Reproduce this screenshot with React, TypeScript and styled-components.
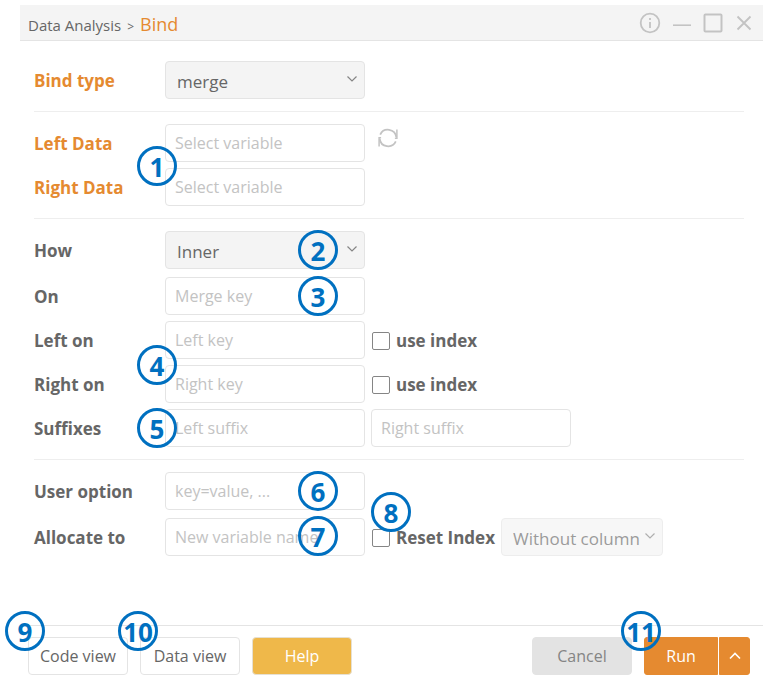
import React, { useState } from "react";
import styled, { createGlobalStyle } from "styled-components";

const colors = {
  accent: "#e58a30",
  amber: "#efb84a",
  text: "#666666",
  muted: "#c3c3c3",
  line: "#e4e4e4",
  faint: "#eeeeee",
  panel: "#f4f4f4",
  badge: "#0070c0",
};

const GlobalStyle = createGlobalStyle`
  * { box-sizing: border-box; }
  body {
    margin: 0;
    background: #fff;
    color: ${colors.text};
    font-family: "Open Sans", "Noto Sans", sans-serif;
    font-size: 16px;
  }
  button, input, select { font: inherit; color: inherit; }
`;

const Dialog = styled.main`
  margin: 5px 7px 0 20px;
`;

const TitleBar = styled.header`
  display: flex;
  align-items: center;
  justify-content: space-between;
  height: 36px;
  padding: 0 10px 0 8px;
  background: ${colors.panel};
  border-bottom: 1px solid ${colors.line};
`;

const Breadcrumb = styled.h1`
  display: flex;
  align-items: baseline;
  gap: 6px;
  margin: 0;
  padding-top: 6px;
  font-size: 15px;
  font-weight: 400;
  line-height: 24px;
`;

const Chevron = styled.span`
  font-size: 12px;
`;

const Current = styled.span`
  color: ${colors.accent};
  font-size: 18px;
`;

const WindowControls = styled.div`
  display: flex;
  align-items: center;
  gap: 12px;
`;

const IconButton = styled.button`
  display: flex;
  padding: 0;
  border: 0;
  background: none;
  color: ${colors.muted};
  cursor: pointer;
`;

const RefreshButton = styled(IconButton)`
  align-self: flex-start;
  margin: 4px 0 0 7px;
`;

const Form = styled.form`
  padding: 8px 19px 57px 14px;
`;

const Section = styled.section`
  padding: 12px 0;
  & + & {
    border-top: 1px solid ${colors.faint};
  }
`;

const Row = styled.div<{ $roomy?: boolean }>`
  display: flex;
  align-items: center;
  margin-bottom: ${(p) => (p.$roomy ? "8px" : "6px")};
  &:last-child {
    margin-bottom: 0;
  }
`;

const FieldLabel = styled.label<{ $required?: boolean }>`
  flex: 0 0 131px;
  padding-top: 2px;
  font-size: 17px;
  font-weight: 700;
  line-height: 24px;
  color: ${(p) => (p.$required ? colors.accent : colors.text)};
`;

const Fields = styled.div`
  position: relative;
  display: flex;
  align-items: center;
  gap: 6px;
`;

const TextInput = styled.input`
  width: 200px;
  height: 38px;
  padding: 0 9px;
  border: 1px solid ${colors.line};
  border-radius: 4px;
  background: #fff;
  &::placeholder {
    color: ${colors.muted};
    opacity: 1;
  }
`;

const SelectFrame = styled.div<{ $narrow?: boolean; $off?: boolean }>`
  display: grid;
  align-items: center;
  width: ${(p) => (p.$narrow ? "162px" : "200px")};
  opacity: ${(p) => (p.$off ? 0.65 : 1)};
  & > * {
    grid-area: 1 / 1;
  }
  & > svg {
    justify-self: end;
    margin: 0 7px 2px 0;
    pointer-events: none;
  }
`;

const SelectBox = styled.select`
  width: 100%;
  height: 38px;
  padding: 3px 11px 0;
  border: 1px solid ${colors.line};
  border-radius: 4px;
  background: ${colors.panel};
  font-size: 17px;
  appearance: none;
  opacity: 1;
`;

const CheckLabel = styled.label`
  display: flex;
  align-items: center;
  gap: 6px;
  padding: 2px 0 0 1px;
  font-size: 17px;
  font-weight: 700;
  line-height: 24px;
  white-space: nowrap;
`;

const CheckBox = styled.input`
  width: 18px;
  height: 18px;
  margin: 0;
  border: 1px solid #858585;
  border-radius: 2px;
  background: #fff;
  appearance: none;
  &:checked {
    background: ${colors.accent};
  }
`;

const Footer = styled.footer`
  display: flex;
  align-items: center;
  justify-content: space-between;
  gap: 12px;
  padding: 11px 13px 8px 8px;
  border-top: 1px solid ${colors.line};
`;

const Actions = styled.div`
  position: relative;
  display: flex;
  gap: 12px;
`;

const Split = styled.div`
  position: relative;
  display: flex;
  gap: 1px;
`;

type Tone = "plain" | "help" | "cancel" | "run";
const tones: Record<Tone, string> = {
  plain: `background: #fff; color: ${colors.text}; border-color: ${colors.line};`,
  help: `background: ${colors.amber}; color: #fff; border-color: #e6e0d2;`,
  cancel: `background: #e3e3e3; color: #858585; border-color: #e3e3e3;`,
  run: `background: ${colors.accent}; color: #fff; border-color: ${colors.accent};`,
};

const ActionButton = styled.button<{ $tone: Tone; $part?: "main" | "menu" }>`
  display: flex;
  align-items: center;
  justify-content: center;
  width: ${(p) => (p.$part === "main" ? 74 : p.$part === "menu" ? 31 : 100)}px;
  height: 38px;
  padding: 0;
  border: 1px solid;
  border-radius: ${(p) =>
    p.$part === "main" ? "3px 0 0 3px" : p.$part === "menu" ? "0 3px 3px 0" : "4px"};
  cursor: pointer;
  ${(p) => tones[p.$tone]}
`;

/* Numbered callout laid over the control that it explains. */
const Callout = styled.span<{ $x: number; $y: number }>`
  position: absolute;
  left: ${(p) => p.$x}px;
  top: ${(p) => p.$y}px;
  z-index: 1;
  display: flex;
  align-items: center;
  justify-content: center;
  width: 40px;
  height: 40px;
  padding-top: 2px;
  border: 3px solid ${colors.badge};
  border-radius: 50%;
  color: ${colors.badge};
  font-size: 26px;
  font-weight: 700;
  line-height: 30px;
  pointer-events: none;
`;

const InfoIcon = () => (
  <svg width="22" height="22" viewBox="0 0 22 22" fill="none" stroke="currentColor" strokeWidth="1.8">
    <circle cx="11" cy="11" r="9.3" />
    <path d="M11 10v6M11 6v2" />
  </svg>
);

const MinimizeIcon = () => (
  <svg width="18" height="22" viewBox="0 0 18 22" fill="none" stroke="currentColor" strokeWidth="1.6">
    <path d="M0 13.2h18" />
  </svg>
);

const MaximizeIcon = () => (
  <svg width="20" height="22" viewBox="0 0 20 22" fill="none" stroke="currentColor" strokeWidth="2">
    <rect x="1.5" y="2.5" width="17" height="17" rx="1" />
  </svg>
);

const CloseIcon = () => (
  <svg width="18" height="22" viewBox="0 0 18 22" fill="none" stroke="currentColor" strokeWidth="1.8">
    <path d="M2.5 4.5l13 13M15.5 4.5l-13 13" />
  </svg>
);

const RefreshIcon = () => (
  <svg width="20" height="20" viewBox="0 0 20 20" fill="none" stroke="currentColor" strokeWidth="1.8">
    <path d="M2.200 6.600A8.500 8.500 0 0 1 18.300 9M17.800 13.400A8.500 8.500 0 0 1 1.700 11" />
    <path d="M18.900 1.500v8.700h-2M1.100 18.500v-8.700h2" strokeWidth="1.5" />
  </svg>
);

const DownIcon = () => (
  <svg width="12" height="8" viewBox="0 0 12 8" fill="none" stroke="#858585" strokeWidth="1.2">
    <path d="M1.5 1.5L6 6l4.500-4.500" />
  </svg>
);

const UpIcon = () => (
  <svg width="12" height="8" viewBox="0 0 12 8" fill="none" stroke="currentColor" strokeWidth="1.6">
    <path d="M1 6.500L6 1.500l5 5" />
  </svg>
);

interface SelectProps {
  id?: string;
  label?: string;
  options: string[];
  narrow?: boolean;
  disabled?: boolean;
}

const Select = ({ id, label, options, narrow, disabled }: SelectProps) => (
  <SelectFrame $narrow={narrow} $off={disabled}>
    <SelectBox id={id} aria-label={label} disabled={disabled}>
      {options.map((o) => (
        <option key={o}>{o}</option>
      ))}
    </SelectBox>
    <DownIcon />
  </SelectFrame>
);

const Check = ({ children }: { children: React.ReactNode }) => (
  <CheckLabel>
    <CheckBox type="checkbox" />
    {children}
  </CheckLabel>
);

interface FieldProps {
  id: string;
  label: string;
  required?: boolean;
  roomy?: boolean;
  children: React.ReactNode;
}

const Field = ({ id, label, required, roomy, children }: FieldProps) => (
  <Row $roomy={roomy}>
    <FieldLabel htmlFor={id} $required={required}>
      {label}
    </FieldLabel>
    <Fields>{children}</Fields>
  </Row>
);

export default function App() {
  const [resetIndex, setResetIndex] = useState(false);
  return (
    <>
      <GlobalStyle />
      <Dialog>
        <TitleBar>
          <Breadcrumb>
            Data Analysis <Chevron>&gt;</Chevron> <Current>Bind</Current>
          </Breadcrumb>
          <WindowControls>
            <IconButton aria-label="Information"><InfoIcon /></IconButton>
            <IconButton aria-label="Minimize"><MinimizeIcon /></IconButton>
            <IconButton aria-label="Maximize"><MaximizeIcon /></IconButton>
            <IconButton aria-label="Close"><CloseIcon /></IconButton>
          </WindowControls>
        </TitleBar>

        <Form onSubmit={(e) => e.preventDefault()}>
          <Section>
            <Field id="bindType" label="Bind type" required>
              <Select id="bindType" options={["merge", "concat"]} />
            </Field>
          </Section>

          <Section>
            <Field id="leftData" label="Left Data" required>
              <TextInput id="leftData" placeholder="Select variable" />
              <RefreshButton type="button" aria-label="Refresh"><RefreshIcon /></RefreshButton>
              <Callout $x={-28} $y={22}>1</Callout>
            </Field>
            <Field id="rightData" label="Right Data" required>
              <TextInput id="rightData" placeholder="Select variable" />
            </Field>
          </Section>

          <Section>
            <Field id="how" label="How" roomy>
              <Select id="how" options={["Inner", "Outer", "Left", "Right"]} />
              <Callout $x={133} $y={-1}>2</Callout>
            </Field>
            <Field id="on" label="On">
              <TextInput id="on" placeholder="Merge key" />
              <Callout $x={133} $y={-1}>3</Callout>
            </Field>
            <Field id="leftOn" label="Left on">
              <TextInput id="leftOn" placeholder="Left key" />
              <Check>use index</Check>
              <Callout $x={-28} $y={24}>4</Callout>
            </Field>
            <Field id="rightOn" label="Right on">
              <TextInput id="rightOn" placeholder="Right key" />
              <Check>use index</Check>
            </Field>
            <Field id="leftSuffix" label="Suffixes">
              <TextInput id="leftSuffix" placeholder="Left suffix" />
              <TextInput aria-label="Right suffix" placeholder="Right suffix" />
              <Callout $x={-28} $y={-1}>5</Callout>
            </Field>
          </Section>

          <Section>
            <Field id="userOption" label="User option" roomy>
              <TextInput id="userOption" placeholder="key=value, ..." />
              <Callout $x={133} $y={-1}>6</Callout>
            </Field>
            <Field id="allocateTo" label="Allocate to">
              <TextInput id="allocateTo" placeholder="New variable name" />
              <Callout $x={133} $y={-2}>7</Callout>
              <CheckLabel>
                <CheckBox
                  type="checkbox"
                  checked={resetIndex}
                  onChange={(e) => setResetIndex(e.target.checked)}
                />
                Reset Index
              </CheckLabel>
              <Select
                label="Column handling"
                options={["Without column", "With column"]}
                narrow
                disabled={!resetIndex}
              />
              <Callout $x={206} $y={-26}>8</Callout>
            </Field>
          </Section>
        </Form>

        <Footer>
          <Actions>
            <ActionButton $tone="plain">Code view</ActionButton>
            <ActionButton $tone="plain">Data view</ActionButton>
            <ActionButton $tone="help">Help</ActionButton>
            <Callout $x={-23} $y={-26}>9</Callout>
            <Callout $x={90} $y={-26}>10</Callout>
          </Actions>
          <Actions>
            <ActionButton $tone="cancel">Cancel</ActionButton>
            <Split>
              <ActionButton $tone="run" $part="main">Run</ActionButton>
              <ActionButton $tone="run" $part="menu" aria-label="More run options">
                <UpIcon />
              </ActionButton>
              <Callout $x={-23} $y={-26}>11</Callout>
            </Split>
          </Actions>
        </Footer>
      </Dialog>
    </>
  );
}
